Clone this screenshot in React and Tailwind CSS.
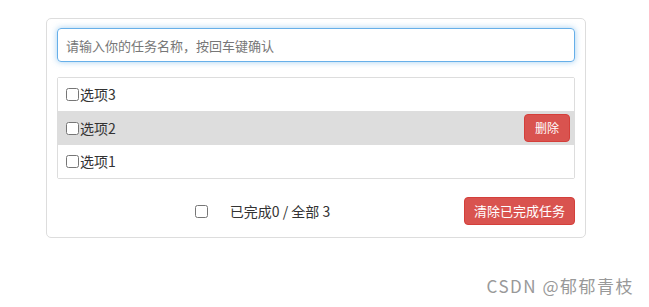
import React, { useState } from "react";

const font = { fontFamily: '"Microsoft YaHei", "Noto Sans CJK SC", "Liberation Sans", sans-serif' };

export default function App() {
  const [todos] = useState([
    { id: 3, name: "选项3", done: false },
    { id: 2, name: "选项2", done: false, hover: true },
    { id: 1, name: "选项1", done: false },
  ]);

  return (
    <div className="w-[649px] h-[307px] bg-white text-[#333]" style={font}>
      <div className="ml-[46px] pt-[18px] w-[540px]">
        <div className="border border-[#ddd] rounded-[5px] px-[10px] pt-[9px] pb-[12px]">
          {/* Header */}
          <input
            className="w-full h-[34px] px-[8px] text-[13px] border border-[#66afe9] rounded-[4px] outline-none shadow-[0_0_6px_rgba(102,175,233,0.6)] placeholder:text-[#777]"
            placeholder="请输入你的任务名称，按回车键确认"
          />

          {/* List */}
          <ul className="mt-[15px] border border-[#ddd] rounded-[2px]">
            {todos.map((t) => (
              <li
                key={t.id}
                className={`h-[33px] flex items-center pl-[8px] pr-[4px] text-[14px] ${
                  t.hover ? "bg-[#ddd] h-[34px]" : "bg-white"
                }`}
              >
                <label className="flex items-center flex-1">
                  <input type="checkbox" className="w-[13px] h-[13px] mr-[1px]" defaultChecked={t.done} />
                  <span>{t.name}</span>
                </label>
                {t.hover && (
                  <button className="h-[28px] px-[10px] text-[12px] text-white bg-[#d9534f] border border-[#d43f3a] rounded-[4px]">
                    删除
                  </button>
                )}
              </li>
            ))}
          </ul>

          {/* Footer */}
          <div className="mt-[18px] flex items-center">
            <div className="flex-1 flex items-center justify-center text-[14px] pl-[4px]">
              <input type="checkbox" className="w-[13px] h-[13px]" />
              <span className="ml-[22px]">已完成0 / 全部 3</span>
            </div>
            <button className="h-[28px] w-[111px] text-[13px] text-white bg-[#d9534f] border border-[#d43f3a] rounded-[4px]">
              清除已完成任务
            </button>
          </div>
        </div>
      </div>

      <div className="flex justify-end pr-[15px] mt-[35px]">
        <span className="text-[17px] text-[#999] tracking-[1.5px]" style={font}>CSDN @郁郁青枝</span>
      </div>
    </div>
  );
}
